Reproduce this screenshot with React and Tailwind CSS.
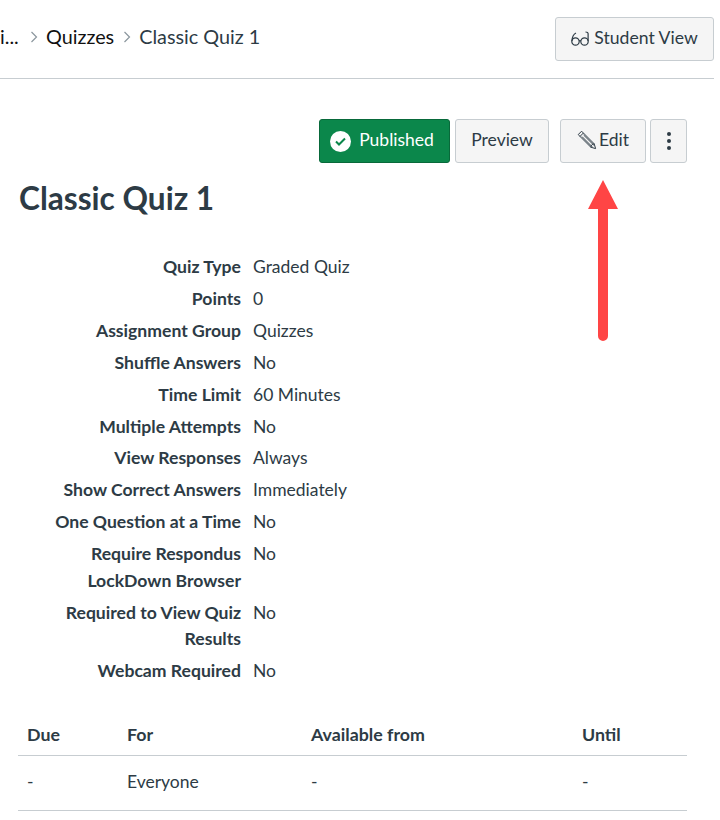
const rows = [
  ["Quiz Type", "Graded Quiz"],
  ["Points", "0"],
  ["Assignment Group", "Quizzes"],
  ["Shuffle Answers", "No"],
  ["Time Limit", "60 Minutes"],
  ["Multiple Attempts", "No"],
  ["View Responses", "Always"],
  ["Show Correct Answers", "Immediately"],
  ["One Question at a Time", "No"],
  ["Require Respondus LockDown Browser", "No"],
  ["Required to View Quiz Results", "No"],
  ["Webcam Required", "No"],
];

function Chevron() {
  return (
    <svg width="8" height="12" viewBox="0 0 8 12" fill="none" stroke="#8b969e" strokeWidth="1.2">
      <path d="M1.5 1l5 5-5 5" />
    </svg>
  );
}

function Glasses() {
  return (
    <svg width="18" height="16" viewBox="0 0 18 16" fill="none" stroke="#2d3b45" strokeWidth="1.2">
      <circle cx="4.5" cy="10.5" r="3.7" />
      <circle cx="13.5" cy="10.5" r="3.7" />
      <path d="M8.2 10c.5-.6 1.1-.6 1.6 0" />
      <path d="M0.9 10C1.2 6 2.6 3 5 2" />
      <path d="M17.1 10V2.5C17 1.5 16 1 14.5 1" />
    </svg>
  );
}

function Pencil() {
  return (
    <svg width="20" height="20" viewBox="0 0 20 20" fill="none" stroke="#2d3b45" strokeWidth="1">
      <path d="M1.2 4.6L4.6 1.2 17.2 13.8 18.6 18.6 13.8 17.2z" />
      <path d="M3 6.4L6.4 3" />
      <path d="M5 6.6L15.2 16.8M6.6 5L16.8 15.2" />
      <path d="M13.8 17.2c0-1.8 1.6-3.4 3.4-3.4" />
    </svg>
  );
}

export default function App() {
  return (
    <div className="relative w-[720px] h-[820px] overflow-hidden bg-white text-[#2d3b45] font-['Lato',sans-serif]">
      <header className="w-[714px] h-[79px] border-b border-[#c7cdd1] flex items-center justify-between">
        <nav className="flex items-center text-[19.8px] -mt-[4px]">
          <span className="text-[#111] w-[22px] overflow-hidden">i...</span>
          <span className="ml-[8px] mr-[8px]"><Chevron /></span>
          <span className="text-[#111]">Quizzes</span>
          <span className="ml-[9px] mr-[8px]"><Chevron /></span>
          <span>Classic Quiz 1</span>
        </nav>
        <button className="w-[159px] h-[44px] -mt-[1px] flex items-center justify-center gap-[5px] bg-[#f5f5f5] border border-[#c7cdd1] rounded-[3px] text-[17.6px]">
          <Glasses />
          Student View
        </button>
      </header>

      <main className="w-[687px] pl-[18px]">
        <div className="flex justify-end pt-[40px] text-[17.5px]">
          <button className="w-[131px] h-[44px] pb-[2px] pr-[5px] flex items-center justify-center gap-[8px] bg-[#0b874b] border border-[#08693a] rounded-[3px] text-white">
            <span className="w-[21px] h-[21px] mt-[2px] rounded-full bg-white flex items-center justify-center">
              <svg width="11" height="9" viewBox="0 0 11 9" fill="none" stroke="#0b874b" strokeWidth="2">
                <path d="M1 4.5l3 3 6-6" />
              </svg>
            </span>
            Published
          </button>
          <button className="ml-[5px] w-[94px] h-[44px] pb-[2px] bg-[#f5f5f5] border border-[#c7cdd1] rounded-[3px]">Preview</button>
          <button className="ml-[11px] w-[86px] h-[44px] pb-[2px] flex items-center justify-center gap-[2px] bg-[#f5f5f5] border border-[#c7cdd1] rounded-[3px]">
            <Pencil />
            Edit
          </button>
          <button className="ml-[4px] w-[37px] h-[44px] flex flex-col items-center justify-center gap-[3px] bg-[#f5f5f5] border border-[#c7cdd1] rounded-[3px]">
            <span className="w-[4px] h-[4px] rounded-full bg-[#2d3b45]" />
            <span className="w-[4px] h-[4px] rounded-full bg-[#2d3b45]" />
            <span className="w-[4px] h-[4px] rounded-full bg-[#2d3b45]" />
          </button>
        </div>

        <h1 className="mt-[16px] ml-[1px] text-[31.6px] leading-[38px] font-bold">Classic Quiz 1</h1>

        <dl className="mt-[37.1px] text-[17.5px] leading-[26.5px]">
          {rows.map(([label, value]) => (
            <div key={label} className="flex pb-[5.4px]">
              <dt className="w-[223px] text-right font-bold text-[17.6px]">{label}</dt>
              <dd className="ml-[12px]">{value}</dd>
            </div>
          ))}
        </dl>

        <table className="mt-[23.3px] w-full text-[17.5px] text-left border-collapse">
          <thead>
            <tr className="border-b border-[#c7cdd1] h-[42px] text-[17.8px]">
              <th className="w-[100px] pl-[9px] pt-[2px] font-bold">Due</th>
              <th className="w-[183px] pl-[9px] pt-[2px] font-bold">For</th>
              <th className="w-[272px] pl-[10px] pt-[2px] font-bold">Available from</th>
              <th className="pl-[9px] pt-[2px] font-bold">Until</th>
            </tr>
          </thead>
          <tbody>
            <tr className="border-b border-[#c7cdd1] h-[55px]">
              <td className="pl-[9px]">-</td>
              <td className="pl-[9px]">Everyone</td>
              <td className="pl-[10px]">-</td>
              <td className="pl-[9px]">-</td>
            </tr>
          </tbody>
        </table>
      </main>

      <svg className="absolute left-[587px] top-[178px]" width="32" height="164" viewBox="0 0 32 164">
        <path d="M16 2L31 31H21V158a5 5 0 0 1-10 0V31H1z" fill="#ff4545" />
      </svg>
    </div>
  );
}
